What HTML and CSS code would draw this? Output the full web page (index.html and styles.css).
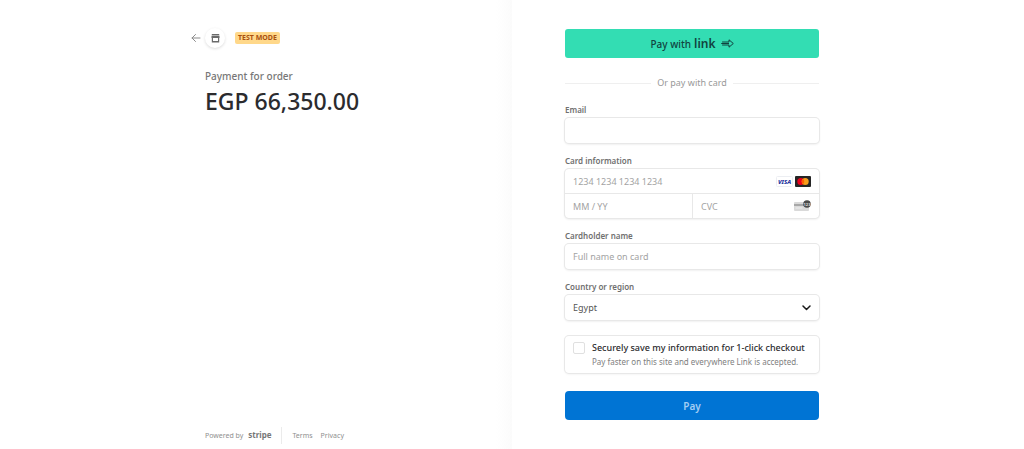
FILE: index.html
```html
<!DOCTYPE html>
<html lang="en">
<head>
    <meta charset="UTF-8">
    <meta name="viewport" content="width=device-width, initial-scale=1.0">
    <title>Checkout</title>
    <link rel="stylesheet" href="styles.css">
</head>
<body>
    <div class="checkout">
        <section class="overview">
            <div class="overview-inner">
                <header class="merchant">
                    <a href="#" class="back-link" aria-label="Back">
                        <svg width="10" height="10" viewBox="0 0 10 10" fill="none" stroke="currentColor" stroke-linecap="round" stroke-linejoin="round">
                            <path d="M9 5H1M4.500 1.500L1 5l3.500 3.500"/>
                        </svg>
                    </a>
                    <span class="merchant-icon">
                        <svg width="9" height="9" viewBox="0 0 9 9" fill="currentColor">
                            <path d="M.8 0h7.400v1.200H.8zM.5 1.700h8V4H.5z"/>
                            <path d="M.8 3.500h1.200v3.500h5V3.500h1.200V8.500H.8z"/>
                        </svg>
                    </span>
                    <span class="badge">TEST MODE</span>
                </header>
                <p class="product">Payment for order</p>
                <h1 class="amount">EGP 66,350.00</h1>
                <footer class="footer">
                    <a href="#" class="powered">Powered by <strong>stripe</strong></a>
                    <a href="#">Terms</a>
                    <a href="#">Privacy</a>
                </footer>
            </div>
        </section>

        <main class="payment">
            <form class="payment-form">
                <button type="button" class="link-btn">
                    <span>Pay with</span>
                    <span class="link-logo">link</span>
                    <svg width="13" height="9" viewBox="0 0 13 9" fill="none" stroke="currentColor" stroke-linecap="round" stroke-linejoin="round">
                        <path d="M1.500 3H8V.8l4.300 3.700L8 8.200V6H1.500M.6 4.500h7"/>
                    </svg>
                </button>
                <div class="divider">Or pay with card</div>

                <div class="form-group">
                    <label for="email">Email</label>
                    <input type="email" id="email" class="field">
                </div>

                <div class="form-group">
                    <label for="cardNumber">Card information</label>
                    <div class="card-fields">
                        <div class="card-cell card-number">
                            <input type="text" id="cardNumber" placeholder="1234 1234 1234 1234">
                            <svg width="17" height="11" viewBox="0 0 17 11">
                                <rect x=".5" y=".5" width="16" height="10" rx="1" fill="#fff" stroke="#eceef2"/>
                                <text x="8.500" y="8" text-anchor="middle" class="visa-text">VISA</text>
                            </svg>
                            <svg width="16" height="11" viewBox="0 0 16 11">
                                <rect width="16" height="11" rx="1" fill="#252525"/>
                                <circle cx="5.800" cy="5.500" r="3.500" fill="#eb001b"/>
                                <circle cx="10.200" cy="5.500" r="3.500" fill="#f79e1b"/>
                                <path d="M8 2.780a3.500 3.500 0 0 1 0 5.440a3.500 3.500 0 0 1 0-5.440z" fill="#ff5f00"/>
                            </svg>
                        </div>
                        <div class="card-cell">
                            <input type="text" placeholder="MM / YY" aria-label="Expiry date">
                        </div>
                        <div class="card-cell card-cvc">
                            <input type="text" placeholder="CVC" aria-label="CVC">
                            <svg width="17" height="12" viewBox="0 0 17 12">
                                <rect y="2" width="15" height="9" rx="1" fill="#d9d9d9"/>
                                <path d="M0 4h15v2H0z" fill="#a8a8a8"/>
                                <path d="M1.500 8h7" stroke="#efefef"/>
                                <circle cx="13" cy="4" r="3.800" fill="#4a4a4a"/>
                                <text x="13" y="5.500" text-anchor="middle" class="cvc-text">123</text>
                            </svg>
                        </div>
                    </div>
                </div>

                <div class="form-group">
                    <label for="cardName">Cardholder name</label>
                    <input type="text" id="cardName" class="field" placeholder="Full name on card">
                </div>

                <div class="form-group">
                    <label for="country">Country or region</label>
                    <div class="select-wrap">
                        <select id="country" class="field">
                            <option>Egypt</option>
                        </select>
                        <svg class="chevron" width="9" height="6" viewBox="0 0 9 6" fill="none" stroke="#1a1a1a" stroke-width="1.500" stroke-linecap="round" stroke-linejoin="round">
                            <path d="M1 1l3.500 3.500L8 1"/>
                        </svg>
                    </div>
                </div>

                <div class="save-box">
                    <input type="checkbox" id="saveInfo">
                    <label for="saveInfo">
                        <span class="save-title">Securely save my information for 1-click checkout</span>
                        <span class="save-text">Pay faster on this site and everywhere Link is accepted.</span>
                    </label>
                </div>

                <button type="submit" class="pay-btn">Pay</button>
            </form>
        </main>
    </div>
</body>
</html>
```

FILE: styles.css
```css
* {
    box-sizing: border-box;
}
body {
    margin: 0;
    font-family: "Noto Sans", "Open Sans", sans-serif;
    font-size: 10px;
    color: #2b2b2e;
    background-color: white;
}
button, input, select {
    font-family: inherit;
    font-size: inherit;
    color: inherit;
}
svg {
    flex: none;
}
a {
    color: inherit;
    text-decoration: none;
}
.checkout {
    display: grid;
    grid-template-columns: 1fr 1fr;
    min-height: 100vh;
}
.overview {
    display: flex;
    justify-content: flex-end;
    padding: 28px 53px 5px;
    background: linear-gradient(to left, #fbfbfb, white 16px);
}
.overview-inner {
    display: flex;
    flex-direction: column;
    width: 100%;
    max-width: 254px;
}
.merchant {
    display: flex;
    align-items: center;
    height: 20px;
    margin-left: -14px;
}
.back-link {
    display: flex;
    color: #8b8b8b;
}
.merchant-icon {
    display: flex;
    align-items: center;
    justify-content: center;
    width: 20px;
    height: 20px;
    margin: 0 10px 0 4px;
    border-radius: 50%;
    color: #6a6a6a;
    box-shadow: 0 1px 3px rgba(0, 0, 0, 0.14);
}
.badge {
    padding: 0 3px;
    border-radius: 2px;
    font-size: 7px;
    line-height: 12px;
    font-weight: bold;
    color: #a8500f;
    background-color: #ffd88a;
}
.product {
    margin: 20px 0 0;
    font-size: 10px;
    line-height: 16px;
    font-weight: 500;
    color: #777;
}
.amount {
    margin: 2px 0 0;
    font-size: 23px;
    line-height: 30px;
    font-weight: 500;
}
.footer {
    display: flex;
    align-items: center;
    gap: 8px;
    margin-top: auto;
    font-size: 7px;
    line-height: 16px;
    color: #8f8f8f;
}
.powered {
    padding-right: 10px;
    margin-right: 2px;
    border-right: 1px solid #ebebeb;
}
.powered strong {
    margin-left: 3px;
    font-size: 8px;
    color: #777;
}
.payment {
    padding: 29px 53px;
}
.payment-form {
    display: flex;
    flex-direction: column;
    width: 100%;
    max-width: 254px;
}
.link-btn {
    display: flex;
    align-items: center;
    justify-content: center;
    height: 29px;
    padding: 0;
    border: none;
    border-radius: 3px;
    font-size: 10px;
    font-weight: 500;
    color: #11433f;
    background-color: #33ddb3;
    cursor: pointer;
}
.link-logo {
    margin: 0 5px 0 3px;
    font-size: 12px;
    line-height: 16px;
    font-weight: 600;
}
.divider {
    display: flex;
    align-items: center;
    gap: 6px;
    margin: 17px 0 13px;
    font-size: 9px;
    line-height: 16px;
    color: #999;
}
.divider::before,
.divider::after {
    content: "";
    flex: 1;
    height: 1px;
    background-color: #efefef;
}
.form-group {
    margin-bottom: 12px;
}
.form-group label {
    display: block;
    margin-bottom: 2px;
    font-size: 8px;
    line-height: 12px;
    font-weight: 600;
    color: #707070;
}
.field {
    display: block;
    width: 100%;
    height: 25px;
    padding: 0 8px;
    border: none;
    border-radius: 4px;
    font-size: 9px;
    color: #555;
    background-color: white;
    box-shadow: 0 0 0 1px #e8e8e8, 0 1px 2px 1px rgba(0, 0, 0, 0.06);
    appearance: none;
}
::placeholder {
    color: #a3a3a3;
    opacity: 1;
}
.card-fields {
    display: grid;
    grid-template-columns: repeat(2, minmax(0, 1fr));
    border-radius: 4px;
    box-shadow: 0 0 0 1px #e8e8e8, 0 1px 2px 1px rgba(0, 0, 0, 0.06);
}
.card-cell {
    display: flex;
    align-items: center;
    gap: 2px;
    height: 24px;
    padding: 0 8px;
}
.card-cell input {
    flex: 1;
    min-width: 0;
    padding: 0;
    border: none;
    font-size: 9px;
    background: none;
}
.card-number {
    grid-column: 1 / -1;
    height: 25px;
    border-bottom: 1px solid #e8e8e8;
}
.card-cvc {
    border-left: 1px solid #e8e8e8;
}
.visa-text {
    font-size: 6px;
    font-weight: 800;
    font-style: italic;
    fill: #1a2f9c;
}
.cvc-text {
    font-size: 4px;
    font-weight: bold;
    fill: #ddd;
}
.select-wrap {
    position: relative;
}
.chevron {
    position: absolute;
    top: 10px;
    right: 8px;
    pointer-events: none;
}
.save-box {
    display: flex;
    gap: 7px;
    margin-top: 4px;
    padding: 5px 8px 4px;
    border-radius: 4px;
    box-shadow: 0 0 0 1px #e8e8e8, 0 1px 2px 1px rgba(0, 0, 0, 0.04);
}
.save-box input {
    flex: none;
    width: 12px;
    height: 12px;
    margin: 1px 0 0;
    border: 1px solid #e0e0e0;
    border-radius: 2px;
    appearance: none;
}
.save-title,
.save-text {
    display: block;
    line-height: 14px;
    white-space: nowrap;
}
.save-title {
    font-size: 9px;
    font-weight: 500;
}
.save-text {
    font-size: 8px;
    color: #808080;
}
.pay-btn {
    height: 29px;
    margin-top: 18px;
    padding: 0;
    border: none;
    border-radius: 4px;
    font-size: 10px;
    font-weight: 600;
    color: #a3cdf3;
    background-color: #0074d4;
    cursor: pointer;
}
```
